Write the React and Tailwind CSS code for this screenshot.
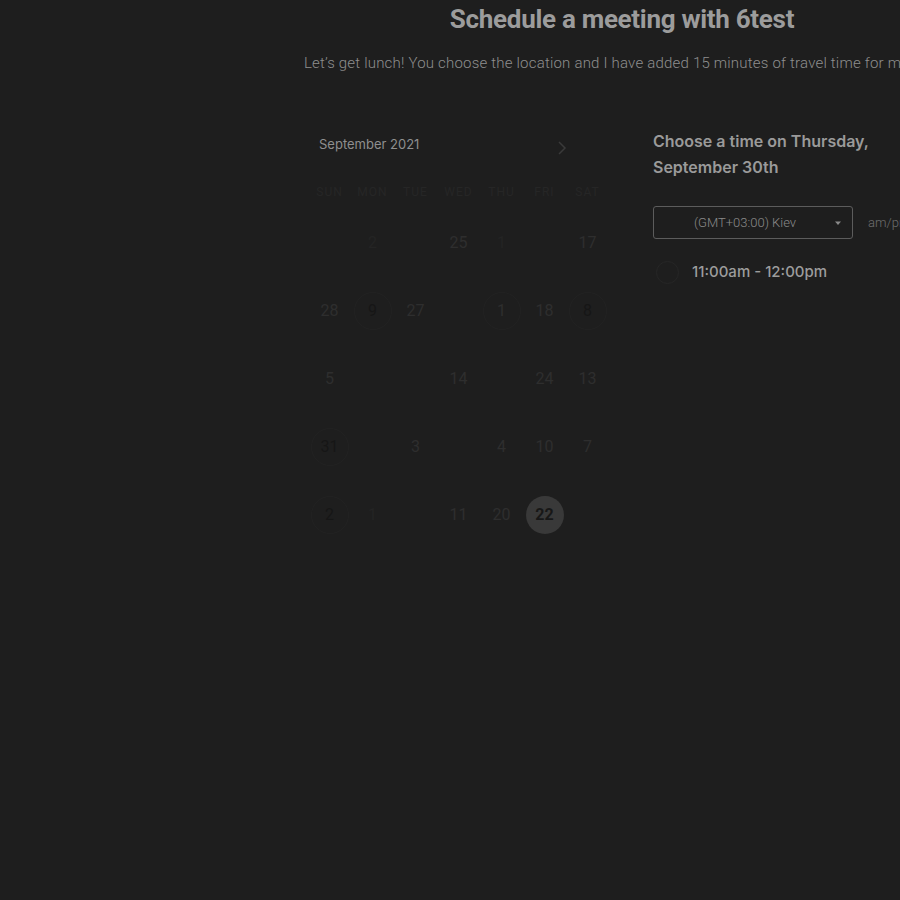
import React from "react";

const rows = [
  [null, { t: "2", faint: true }, null, { t: "25" }, { t: "1", faint: true }, null, { t: "17" }],
  [{ t: "28" }, { t: "9", ring: true, dark: true }, { t: "27" }, null, { t: "1", ring: true }, { t: "18" }, { t: "8", ring: true, dark: true }],
  [{ t: "5" }, null, null, { t: "14" }, null, { t: "24" }, { t: "13" }],
  [{ t: "31", ring: true, dark: true }, null, { t: "3" }, null, { t: "4" }, { t: "10" }, { t: "7" }],
  [{ t: "2", ring: true, dark: true }, { t: "1", faint: true }, null, { t: "11" }, { t: "20" }, { t: "22", fill: true }, null],
];

const days = ["SUN", "MON", "TUE", "WED", "THU", "FRI", "SAT"];

function Cell({ c }) {
  if (!c) return <div className="h-[68px]" />;
  let cls = "text-[#2e2e2e]";
  if (c.faint) cls = "text-[#242424]";
  if (c.dark) cls = "text-[#161616]";
  if (c.fill) cls = "text-[#171717] font-bold";
  return (
    <div className="h-[68px] flex items-center justify-center">
      <div
        className={
          "w-[38px] h-[38px] rounded-full flex items-center justify-center text-[16px] " +
          cls +
          (c.fill ? " bg-[#393939]" : "") +
          (c.ring ? " border border-[#222222]" : "")
        }
      >
        {c.t}
      </div>
    </div>
  );
}

export default function App() {
  return (
    <div
      className="w-[900px] h-[900px] overflow-hidden bg-[#1e1e1e]"
      style={{ fontFamily: "Roboto, 'Liberation Sans', sans-serif" }}
    >
      <div className="ml-[304px] w-[636px]">
        <h1 className="pt-[4px] text-center text-[26px] leading-[30px] font-bold text-[#9c9c9c] tracking-[-0.3px]">
          Schedule a meeting with 6test
        </h1>
        <p className="mt-[19px] whitespace-nowrap text-[15px] leading-[20px] font-light text-[#8e8e8e] tracking-[0.2px]">
          Let’s get lunch! You choose the location and I have added 15 minutes of travel time for my commute.
        </p>
        <div className="flex mt-[57px]">
          <div className="w-[301px] ml-[4px]">
            <div className="flex items-center justify-between h-[30px]">
              <span
                className="ml-[11px] text-[13px] text-[#8f8f8f]"
                style={{ fontFamily: "Inter, sans-serif" }}
              >
                September 2021
              </span>
              <svg width="12" height="16" viewBox="0 0 12 16" className="mr-[41px] mt-[6px]">
                <path d="M3 2l6 6-6 6" fill="none" stroke="#3a3a3a" strokeWidth="1.5" />
              </svg>
            </div>
            <div className="grid grid-cols-7 mt-[20px] h-[24px] items-center">
              {days.map((d) => (
                <div key={d} className="text-center text-[12px] tracking-[1px] text-[#262626]">
                  {d}
                </div>
              ))}
            </div>
            <div className="grid grid-cols-7 mt-[5px]">
              {rows.flat().map((c, i) => (
                <Cell key={i} c={c} />
              ))}
            </div>
          </div>
          <div className="ml-[44px] flex-1" style={{ fontFamily: "Inter, sans-serif" }}>
            <div className="text-[16px] leading-[26px] font-semibold text-[#9a9a9a] mt-[-2px]">
              Choose a time on Thursday,
              <br />
              September 30th
            </div>
            <div className="flex items-center mt-[26px]">
              <div
                className="w-[200px] h-[33px] border border-[#5c5c5c] rounded-[3px] flex items-center relative"
                style={{ fontFamily: "Roboto, sans-serif" }}
              >
                <span className="w-full text-center pr-[16px] text-[13px] font-light text-[#8a8a8a]">
                  (GMT+03:00) Kiev
                </span>
                <svg width="8" height="6" viewBox="0 0 8 6" className="absolute right-[10px] top-[13px]">
                  <path d="M1 1.5h6L4 5z" fill="#8a8a8a" />
                </svg>
              </div>
              <span
                className="ml-[15px] text-[13px] font-light text-[#6e6e6e] whitespace-nowrap"
                style={{ fontFamily: "Roboto, sans-serif" }}
              >
                am/pm
              </span>
            </div>
            <div className="flex items-center mt-[22px] ml-[3px]">
              <div className="w-[23px] h-[23px] rounded-full border border-[#262626]" />
              <span className="ml-[13px] text-[15px] font-medium text-[#9c9c9c]">
                11:00am - 12:00pm
              </span>
            </div>
          </div>
        </div>
      </div>
    </div>
  );
}
